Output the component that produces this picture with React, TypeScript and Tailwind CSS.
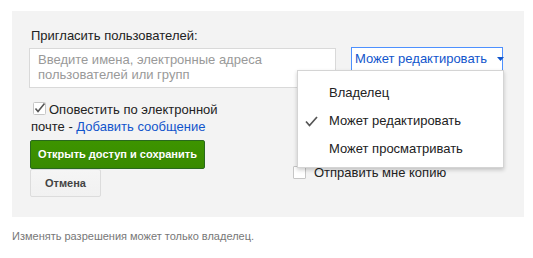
import React from 'react'

const font = { fontFamily: '"Liberation Sans", Arial, sans-serif' }

function CheckedBox() {
  return (
    <svg width="13" height="13" viewBox="0 0 13 13" className="inline-block align-[-1px]">
      <rect x="0.5" y="0.5" width="12" height="12" rx="1" fill="#fff" stroke="#c6c6c6" />
      <path d="M2.5 6.5 L5 9.5 L11.5 1.5" fill="none" stroke="#555" strokeWidth="1.6" />
    </svg>
  )
}

function MenuItem({ label, checked }: { label: string; checked?: boolean }) {
  return (
    <div className="relative flex h-[28px] items-center whitespace-nowrap pl-[31px] text-[13px] text-[#222]">
      {checked ? (
        <svg width="13" height="11" viewBox="0 0 13 11" className="absolute left-[7px] top-[9px]">
          <path d="M1 5.5 L4.5 9.5 L12 1" fill="none" stroke="#555" strokeWidth="1.7" />
        </svg>
      ) : null}
      {label}
    </div>
  )
}

export default function App() {
  return (
    <div className="h-[258px] w-[533px] bg-white" style={font}>
      <div className="ml-[12px] mt-[11px] h-[206px] w-[512px] bg-[#f3f3f3] pl-[17px] pt-[17px]">
        <div className="ml-[2px] text-[13px] leading-[16px] text-[#222]">Пригласить пользователей:</div>

        <div className="mt-[4px] flex items-start">
          <div className="h-[40px] w-[307px] shrink-0 border border-[#d9d9d9] bg-white pl-[8px] pt-[3px] text-[13px] leading-[15px] text-[#999]">
            Введите имена, электронные адреса
            <br />
            пользователей или групп
          </div>
          <div className="relative ml-[15px] mt-[-1px] shrink-0">
            <div className="flex h-[24px] w-[152px] items-center whitespace-nowrap border border-[#4d90fe] bg-white pl-[3px] text-[13px] text-[#15c]">
              Может редактировать
              <svg width="7" height="4" viewBox="0 0 7 4" className="ml-[10px] shrink-0">
                <path d="M0 0 L7 0 L3.5 4 Z" fill="#15c" />
              </svg>
            </div>
            <div className="absolute right-[-1px] top-[23px] z-10 w-[207px] border border-[#d4d4d4] bg-white pb-[4px] pt-[8px] shadow-[0_2px_4px_rgba(0,0,0,0.2)]">
              <MenuItem label="Владелец" />
              <MenuItem label="Может редактировать" checked />
              <MenuItem label="Может просматривать" />
            </div>
          </div>
        </div>

        <div className="flex">
          <div className="w-[264px] shrink-0">
            <div className="ml-[2px] mt-[13px] w-[195px] text-[13px] leading-[17px] text-[#222]">
              <span className="ml-[2px] mr-[3px]"><CheckedBox /></span>
              Оповестить по электронной почте - <span className="text-[#15c]">Добавить сообщение</span>
            </div>
            <div className="ml-[1px] mt-[5px] flex h-[29px] w-[175px] items-center justify-center whitespace-nowrap rounded-[2px] border border-[#29691d] bg-gradient-to-b from-[#3d9400] to-[#398a00] text-[11px] font-bold text-white [text-shadow:0_1px_rgba(0,0,0,0.1)]">
              Открыть доступ и сохранить
            </div>
            <div className="ml-[1px] flex h-[28px] w-[71px] items-center justify-center rounded-[2px] border border-[#dcdcdc] bg-gradient-to-b from-[#f5f5f5] to-[#f1f1f1] text-[11px] font-bold text-[#444]">
              Отмена
            </div>
          </div>
          <div className="mt-[78px] flex h-[13px] shrink-0 items-center whitespace-nowrap text-[13px] text-[#222]">
            <span className="mr-[8px] inline-block h-[13px] w-[13px] rounded-[1px] border border-[#c6c6c6] bg-white" />
            Отправить мне копию
          </div>
        </div>
      </div>
      <div className="ml-[12px] mt-[12px] text-[11px] leading-[14px] text-[#777]">
        Изменять разрешения может только владелец.
      </div>
    </div>
  )
}
